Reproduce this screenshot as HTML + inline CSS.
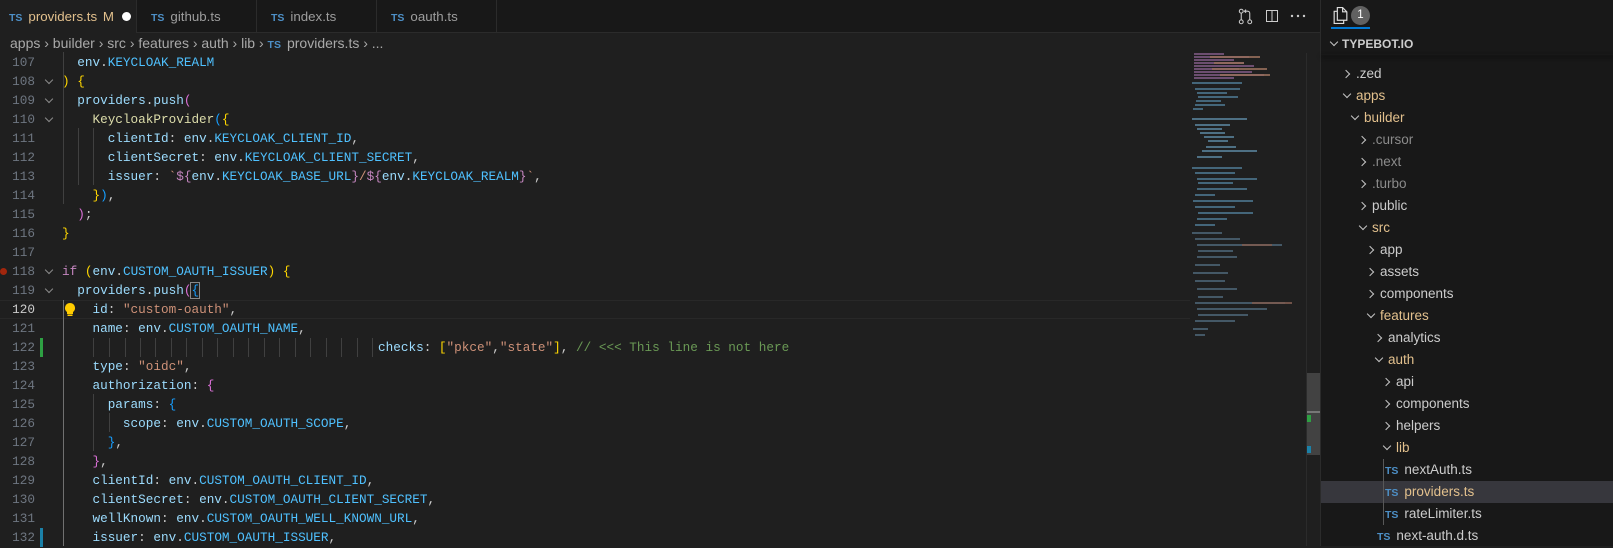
<!DOCTYPE html>
<html><head><meta charset="utf-8">
<style>
*{margin:0;padding:0;box-sizing:border-box}
body{width:1613px;height:546px;overflow:hidden;background:#1f1f1f;font-family:"Liberation Sans",sans-serif;position:relative}
.tabs{position:absolute;left:0;top:0;width:1320px;height:33px;background:#181818;border-bottom:1px solid #2b2b2b}
.tab{position:absolute;top:0;height:33px;border-right:1px solid #2b2b2b;font-size:13.3px;color:#9d9d9d;line-height:33px;padding-left:9px;white-space:nowrap;overflow:hidden}
.ts{color:#4d8fc6;font-weight:bold;font-size:10.5px;margin-right:6px;font-family:"Liberation Sans",sans-serif}
.bc{position:absolute;left:0;top:33px;width:1320px;height:20px;font-size:14px;color:#a9a9a9;line-height:20px;padding-left:10px;background:#1f1f1f;white-space:nowrap}
.code{position:absolute;left:0;top:52.5px;width:1190px;font-family:"Liberation Mono",monospace;font-size:12.7px}
.ln{height:19px;line-height:19px;position:relative;white-space:pre;color:#cccccc}
.num{position:absolute;left:0;width:35px;text-align:right;color:#6e7681}
.fold{position:absolute;left:46px;top:5px;width:6px;height:6px;border-right:1px solid #8b8b8b;border-bottom:1px solid #8b8b8b;transform:rotate(45deg)}
.txt{position:absolute;left:62px}
.v{color:#9cdcfe}.c{color:#4fc1ff}.s{color:#ce9178}.k{color:#c586c0}.f{color:#dcdcaa}.y{color:#ffd700}.p{color:#da70d6}.b{color:#179fff}.g{color:#6a9955}
.side{position:absolute;left:1320px;top:0;width:293px;height:546px;background:#181818;border-left:1px solid #2b2b2b}
.row{position:absolute;height:22px;line-height:22px;font-size:13.5px;color:#cccccc;white-space:nowrap;padding-left:13px}
.fo{color:#e2c08d}
.cr,.cd{position:absolute;left:0;width:6px;height:6px;border-right:1.2px solid #c5c5c5;border-bottom:1.2px solid #c5c5c5}
.cr{top:8px;transform:rotate(-45deg)}
.cd{top:6px;left:1px;transform:rotate(45deg)}
</style></head><body>
<div class="tabs">
 <div class="tab" style="left:0;width:137px;background:#1f1f1f;color:#e2c08d"><span class="ts">TS</span>providers.ts <span style="margin-left:2px">M</span><span style="display:inline-block;width:9px;height:9px;border-radius:50%;background:#fff;margin-left:8px;vertical-align:0px"></span></div>
 <div class="tab" style="left:137px;width:120px;padding-left:14px"><span class="ts">TS</span>github.ts</div>
 <div class="tab" style="left:257px;width:120px;padding-left:14px"><span class="ts">TS</span>index.ts</div>
 <div class="tab" style="left:377px;width:120px;padding-left:14px"><span class="ts">TS</span>oauth.ts</div>
 <svg style="position:absolute;left:1237px;top:8px" width="17" height="17" viewBox="0 0 16 16" fill="none" stroke="#ccc" stroke-width="1"><circle cx="4" cy="3" r="1.8"/><circle cx="12" cy="13" r="1.8"/><circle cx="4" cy="13" r="1.8"/><path d="M4 5v6M12 11V5a2 2 0 0 0-2-2H7M8.5 1.5 7 3l1.5 1.5"/></svg>
 <svg style="position:absolute;left:1265px;top:9px" width="14" height="14" viewBox="0 0 14 14" fill="none" stroke="#ccc"><rect x="1.5" y="1.5" width="11" height="11"/><path d="M7 1.5v11"/></svg>
 <svg style="position:absolute;left:1290px;top:14px" width="16" height="4"><circle cx="2" cy="2" r="1.2" fill="#ccc"/><circle cx="8" cy="2" r="1.2" fill="#ccc"/><circle cx="14" cy="2" r="1.2" fill="#ccc"/></svg>
</div>
<div class="bc">apps › builder › src › features › auth › lib › <span class="ts">TS</span>providers.ts › ...</div>

<div class="code">
<div class="ln"><span class="num">107</span><span class="txt">  <span class="v">env</span>.<span class="c">KEYCLOAK_REALM</span></span></div>
<div class="ln"><span class="num">108</span><span class="fold"></span><span class="txt"><span class="y">)</span> <span class="y">{</span></span></div>
<div class="ln"><span class="num">109</span><span class="fold"></span><span class="txt">  <span class="v">providers</span>.<span class="v">push</span><span class="p">(</span></span></div>
<div class="ln"><span class="num">110</span><span class="fold"></span><span class="txt">    <span class="f">KeycloakProvider</span><span class="b">(</span><span class="y">{</span></span></div>
<div class="ln"><span class="num">111</span><span class="txt">      <span class="v">clientId</span>: <span class="v">env</span>.<span class="c">KEYCLOAK_CLIENT_ID</span>,</span></div>
<div class="ln"><span class="num">112</span><span class="txt">      <span class="v">clientSecret</span>: <span class="v">env</span>.<span class="c">KEYCLOAK_CLIENT_SECRET</span>,</span></div>
<div class="ln"><span class="num">113</span><span class="txt">      <span class="v">issuer</span>: <span class="s">`</span><span class="k">${</span><span class="v">env</span>.<span class="c">KEYCLOAK_BASE_URL</span><span class="k">}</span><span class="s">/</span><span class="k">${</span><span class="v">env</span>.<span class="c">KEYCLOAK_REALM</span><span class="k">}</span><span class="s">`</span>,</span></div>
<div class="ln"><span class="num">114</span><span class="txt">    <span class="y">}</span><span class="b">)</span>,</span></div>
<div class="ln"><span class="num">115</span><span class="txt">  <span class="p">)</span>;</span></div>
<div class="ln"><span class="num">116</span><span class="txt"><span class="y">}</span></span></div>
<div class="ln"><span class="num">117</span></div>
<div class="ln"><span style="position:absolute;left:0px;top:6px;width:7px;height:7px;border-radius:50%;background:#a1260d"></span><span class="num">118</span><span class="fold"></span><span class="txt"><span class="k">if</span> <span class="y">(</span><span class="v">env</span>.<span class="c">CUSTOM_OAUTH_ISSUER</span><span class="y">)</span> <span class="y">{</span></span></div>
<div class="ln"><span class="num">119</span><span class="fold"></span><span class="txt">  <span class="v">providers</span>.<span class="v">push</span><span class="p">(</span><span class="b" style="outline:1px solid #888">{</span></span></div>
<div class="ln" style="box-shadow:inset 0 1px #282828, inset 0 -1px #282828;"><span class="num" style="color:#ccc">120</span><svg style="position:absolute;left:64px;top:2px" width="12" height="15" viewBox="0 0 12 15"><path d="M6 1a5 5 0 0 0-3 9v2h6v-2a5 5 0 0 0-3-9z" fill="#ffcc00"/><rect x="3.5" y="12.5" width="5" height="1.5" fill="#ffcc00"/></svg><span class="txt">    <span class="v">id</span>: <span class="s">"custom-oauth"</span>,</span></div>
<div class="ln"><span class="num">121</span><span class="txt">    <span class="v">name</span>: <span class="v">env</span>.<span class="c">CUSTOM_OAUTH_NAME</span>,</span></div>
<div class="ln"><span style="position:absolute;left:40px;top:0;width:3px;height:19px;background:#2ea043"></span><span class="num">122</span><span class="txt" style="left:378px"><span class="v">checks</span>: <span class="y">[</span><span class="s">"pkce"</span>,<span class="s">"state"</span><span class="y">]</span>, <span class="g">// &lt;&lt;&lt; This line is not here</span></span>
<svg style="position:absolute;left:63px;top:0" width="315" height="19"><g stroke="#404040"><path d="M30.5 0v19M46.5 0v19M62.5 0v19M77.5 0v19M92.5 0v19M108.5 0v19M123.5 0v19M139.5 0v19M154.5 0v19M170.5 0v19M185.5 0v19M201.5 0v19M216.5 0v19M232.5 0v19M247.5 0v19M263.5 0v19M278.5 0v19M294.5 0v19M309.5 0v19"/></g></svg></div>
<div class="ln"><span class="num">123</span><span class="txt">    <span class="v">type</span>: <span class="s">"oidc"</span>,</span></div>
<div class="ln"><span class="num">124</span><span class="txt">    <span class="v">authorization</span>: <span class="p">{</span></span></div>
<div class="ln"><span class="num">125</span><span class="txt">      <span class="v">params</span>: <span class="b">{</span></span></div>
<div class="ln"><span class="num">126</span><span class="txt">        <span class="v">scope</span>: <span class="v">env</span>.<span class="c">CUSTOM_OAUTH_SCOPE</span>,</span></div>
<div class="ln"><span class="num">127</span><span class="txt">      <span class="b">}</span>,</span></div>
<div class="ln"><span class="num">128</span><span class="txt">    <span class="p">}</span>,</span></div>
<div class="ln"><span class="num">129</span><span class="txt">    <span class="v">clientId</span>: <span class="v">env</span>.<span class="c">CUSTOM_OAUTH_CLIENT_ID</span>,</span></div>
<div class="ln"><span class="num">130</span><span class="txt">    <span class="v">clientSecret</span>: <span class="v">env</span>.<span class="c">CUSTOM_OAUTH_CLIENT_SECRET</span>,</span></div>
<div class="ln"><span class="num">131</span><span class="txt">    <span class="v">wellKnown</span>: <span class="v">env</span>.<span class="c">CUSTOM_OAUTH_WELL_KNOWN_URL</span>,</span></div>
<div class="ln"><span style="position:absolute;left:40px;top:0;width:3px;height:19px;background:#1b81a8"></span><span class="num">132</span><span class="txt">    <span class="v">issuer</span>: <span class="v">env</span>.<span class="c">CUSTOM_OAUTH_ISSUER</span>,</span></div>
</div>
<!-- indent guides -->
<div style="position:absolute;left:63px;top:52px;width:1px;height:152px;background:#404040"></div>
<div style="position:absolute;left:63px;top:300px;width:1px;height:246px;background:#707070"></div>
<div style="position:absolute;left:78px;top:128px;width:1px;height:57px;background:#404040"></div>
<div style="position:absolute;left:93px;top:128px;width:1px;height:57px;background:#404040"></div>
<div style="position:absolute;left:93px;top:394px;width:1px;height:57px;background:#404040"></div>
<div style="position:absolute;left:109px;top:413px;width:1px;height:19px;background:#404040"></div>

<!-- minimap -->
<svg style="position:absolute;left:1192px;top:53px" width="115" height="300">
<g stroke-width="1.3">
<path d="M2 1h30M2 4h55M2 7h40M2 10h50M2 13h60M2 16h45M2 19h58M2 22h70M2 25h40" stroke="#9a6aa0"/>
<path d="M18 4h50M22 10h30M20 16h55M28 22h50" stroke="#c08a70"/>
<path d="M0 30h50M3 36h45M5 40h30M6 44h40M4 48h25M3 52h30M1 56h10" stroke="#5a90b0"/>
<path d="M0 66h55M3 72h35M5 76h25M8 80h25M12 84h30M16 88h20M14 94h30M10 98h55M5 104h25" stroke="#6aa0c0"/>
<path d="M0 115h50M3 120h40M5 126h60M6 130h35M5 136h50M3 142h20M1 148h60M3 154h40M6 160h55M5 166h30M3 172h20" stroke="#5a90b0"/>
<path d="M0 180h30M3 186h45M5 192h85M6 198h35M5 204h40M3 212h25M1 220h35M3 228h30M5 236h40M6 244h25M3 250h90M5 256h70M6 262h50M3 268h40M1 276h15M3 282h10" stroke="#5a7a90"/>
<path d="M60 250h40M50 192h30" stroke="#a07060"/>
</g></svg>
<!-- scrollbar -->
<div style="position:absolute;left:1306px;top:53px;width:14px;height:493px;background:#1f1f1f;border-left:1px solid #2b2b2b"></div>
<div style="position:absolute;left:1307px;top:373px;width:13px;height:82px;background:#424242"></div>
<div style="position:absolute;left:1307px;top:411px;width:13px;height:2px;background:#777"></div>
<div style="position:absolute;left:1307px;top:415px;width:4px;height:7px;background:#2ea043"></div>
<div style="position:absolute;left:1307px;top:446px;width:4px;height:7px;background:#1b81a8"></div>

<div class="side">
 <svg style="position:absolute;left:11px;top:6px" width="17" height="19" viewBox="0 0 16 18" fill="none" stroke="#ddd" stroke-width="1.1"><path d="M5 1.5h5l4 4v8H5z M10 1.5v4h4"/><path d="M5 5H2v11.5h9v-3"/></svg>
 <div style="position:absolute;left:30px;top:6px;width:19px;height:19px;border-radius:50%;background:#616161;color:#fff;font-size:11.5px;text-align:center;line-height:19px">1</div>
 <div style="position:absolute;left:10px;top:27px;width:39px;height:2px;background:#0078d4"></div>
 <div class="row" style="left:9px;top:33px;font-size:12px;font-weight:bold;color:#ccc;padding-left:12px"><span class="cd"></span>TYPEBOT.IO</div>
 <div style="position:absolute;left:0;top:54px;width:293px;height:1px;box-shadow:0 2px 4px #000;"></div>
 <div class="row" style="left:22px;top:63px"><span class="cr"></span>.zed</div>
 <div class="row" style="left:22px;top:85px" ><span class="cd"></span><span class="fo">apps</span></div>
 <div class="row" style="left:30px;top:107px"><span class="cd"></span><span class="fo">builder</span></div>
 <div class="row" style="left:38px;top:129px;color:#8b8b8b"><span class="cr"></span>.cursor</div>
 <div class="row" style="left:38px;top:151px;color:#8b8b8b"><span class="cr"></span>.next</div>
 <div class="row" style="left:38px;top:173px;color:#8b8b8b"><span class="cr"></span>.turbo</div>
 <div class="row" style="left:38px;top:195px"><span class="cr"></span>public</div>
 <div class="row" style="left:38px;top:217px"><span class="cd"></span><span class="fo">src</span></div>
 <div class="row" style="left:46px;top:239px"><span class="cr"></span>app</div>
 <div class="row" style="left:46px;top:261px"><span class="cr"></span>assets</div>
 <div class="row" style="left:46px;top:283px"><span class="cr"></span>components</div>
 <div class="row" style="left:46px;top:305px"><span class="cd"></span><span class="fo">features</span></div>
 <div class="row" style="left:54px;top:327px"><span class="cr"></span>analytics</div>
 <div class="row" style="left:54px;top:349px"><span class="cd"></span><span class="fo">auth</span></div>
 <div class="row" style="left:62px;top:371px"><span class="cr"></span>api</div>
 <div class="row" style="left:62px;top:393px"><span class="cr"></span>components</div>
 <div class="row" style="left:62px;top:415px"><span class="cr"></span>helpers</div>
 <div class="row" style="left:62px;top:437px"><span class="cd"></span><span class="fo">lib</span></div>
 <div style="position:absolute;left:0;top:481px;width:293px;height:22px;background:#37373d"></div>
 <div style="position:absolute;left:62px;top:459px;width:1px;height:66px;background:#585858"></div>
 <div class="row" style="left:51px;top:459px"><span class="ts">TS</span>nextAuth.ts</div>
 <div class="row" style="left:51px;top:481px"><span class="ts">TS</span><span class="fo">providers.ts</span></div>
 <div class="row" style="left:51px;top:503px"><span class="ts">TS</span>rateLimiter.ts</div>
 <div class="row" style="left:43px;top:525px"><span class="ts">TS</span>next-auth.d.ts</div>
</div>
</body></html>
